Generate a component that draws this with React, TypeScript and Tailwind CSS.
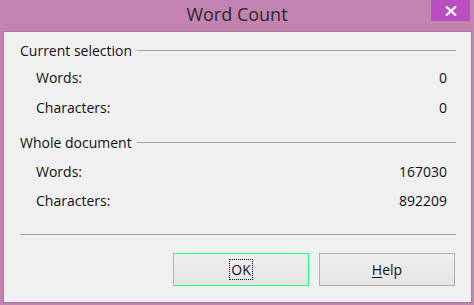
import React from "react";

const font = { fontFamily: '"Open Sans", "Noto Sans", sans-serif' };

function Header({ label }: { label: string }) {
  return (
    <div className="flex items-center h-[20px] pl-[16px] pr-[15px]">
      <span className="text-[14px] leading-[20px] text-[#111] whitespace-nowrap pr-[5px]">{label}</span>
      <div className="flex-1 h-px bg-[#a0a0a0] -mt-[2px]" />
    </div>
  );
}

function Row({ label, value, mt }: { label: string; value: string; mt: string }) {
  return (
    <div className={`flex items-center h-[20px] pl-[32px] pr-[24px] ${mt}`}>
      <span className="flex-1 text-[14px] leading-[20px] text-[#111]">{label}</span>
      <span className="text-[14px] leading-[20px] text-[#111]">{value}</span>
    </div>
  );
}

export default function App() {
  return (
    <div className="w-[474px] h-[305px] bg-[#c283b0] flex flex-col" style={font}>
      <div className="relative h-[31px] flex items-center justify-center">
        <span className="text-[18px] leading-[24px] text-[#2a2a2a] -mt-[3px]">Word Count</span>
        <div className="absolute right-[4px] top-0 w-[39px] h-[21px] bg-[#b94fc2] flex items-center justify-center">
          <svg width="12" height="10" viewBox="0 0 12 10">
            <path d="M1 0.5 L11 9.5 M11 0.5 L1 9.5" stroke="white" strokeWidth="2.2" />
          </svg>
        </div>
      </div>
      <div className="ml-[3px] w-[469px] h-[272px] border border-[#a87a9c] bg-[#f0f0f0] flex flex-col pt-[9px]">
        <Header label="Current selection" />
        <Row label="Words:" value="0" mt="mt-[7px]" />
        <Row label="Characters:" value="0" mt="mt-[10px]" />
        <div className="mt-[15px]">
          <Header label="Whole document" />
        </div>
        <Row label="Words:" value="167030" mt="mt-[9px]" />
        <Row label="Characters:" value="892209" mt="mt-[9px]" />
        <div className="mt-[23px] ml-[16px] mr-[15px] h-px bg-[#a0a0a0]" />
        <div className="mt-[18px] flex justify-end gap-[10px] pr-[16px]">
          <div className="w-[136px] h-[33px] border border-[#2cff80] bg-gradient-to-b from-[#efefef] to-[#e5e5e5] flex items-center justify-center">
            <span className="text-[14px] leading-[19px] text-[#111] outline-1 outline-dotted outline-black px-[1px]">OK</span>
          </div>
          <div className="w-[136px] h-[33px] border border-[#adadad] bg-gradient-to-b from-[#efefef] to-[#e5e5e5] flex items-center justify-center">
            <span className="text-[14px] leading-[20px] text-[#111]"><span className="underline underline-offset-2">H</span>elp</span>
          </div>
        </div>
      </div>
    </div>
  );
}
